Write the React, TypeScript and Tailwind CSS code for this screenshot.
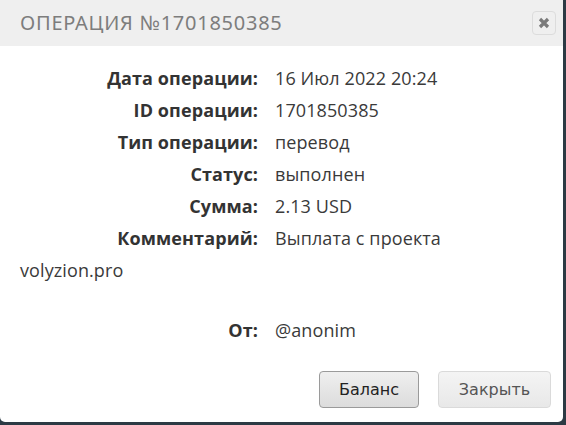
import React from 'react';

const rows = [
  { label: 'Дата операции:', value: '16 Июл 2022 20:24' },
  { label: 'ID операции:', value: '1701850385' },
  { label: 'Тип операции:', value: 'перевод' },
  { label: 'Статус:', value: 'выполнен' },
  { label: 'Сумма:', value: '2.13 USD' },
  { label: 'Комментарий:', value: 'Выплата с проекта' },
];

function Row({ label, value }: { label: string; value: string }) {
  return (
    <div className="flex h-[32px] items-center">
      <div className="w-[258px] text-right font-bold text-[#333]">{label}</div>
      <div className="pl-[17px] text-[#3a3a3a]">{value}</div>
    </div>
  );
}

export default function App() {
  return (
    <div className="h-screen w-full bg-[#2c3a44]">
      <div className="flex h-[422px] w-[563px] flex-col rounded-b-[5px] bg-white">
        {/* header */}
        <div className="flex h-[46px] items-center justify-between bg-[#efefef] pl-[20px] pr-[7px]">
          <h1
            className="text-[20px] tracking-[0.75px] text-[#7d7d7d]"
            style={{ fontFamily: '"Noto Sans", sans-serif' }}
          >
            ОПЕРАЦИЯ №1701850385
          </h1>
          <button className="flex h-[24px] w-[24px] items-center justify-center rounded-[4px] border border-[#dcdcdc] bg-[#efefef]">
            <svg width="12" height="12" viewBox="0 0 12 12">
              <path d="M2 2 L10 10 M10 2 L2 10" stroke="#7a7a7a" strokeWidth="3.2" strokeLinecap="butt" />
            </svg>
          </button>
        </div>

        {/* body */}
        <div
          className="flex flex-1 flex-col pt-[16px] text-[18px] tracking-[0.1px]"
          style={{ fontFamily: '"Open Sans", "Noto Sans", sans-serif' }}
        >
          {rows.map((r) => (
            <Row key={r.label} {...r} />
          ))}
          <div className="flex h-[32px] items-center pl-[20px] text-[#3a3a3a]">volyzion.pro</div>
          <div className="h-[28px]" />
          <Row label="От:" value="@anonim" />

          <div
            className="mt-[25px] flex justify-end gap-[19px] pr-[12px] text-[16px] tracking-normal"
            style={{ fontFamily: '"DejaVu Sans", Verdana, sans-serif' }}
          >
            <button className="h-[37px] w-[100px] rounded-[4px] border border-[#9a9a9a] bg-gradient-to-b from-[#efefef] to-[#dcdcdc] text-[#222]">
              Баланс
            </button>
            <button className="h-[37px] w-[113px] rounded-[4px] border border-[#dadada] bg-gradient-to-b from-[#f4f4f4] to-[#e8e8e8] text-[#555]">
              Закрыть
            </button>
          </div>
        </div>
      </div>
    </div>
  );
}
